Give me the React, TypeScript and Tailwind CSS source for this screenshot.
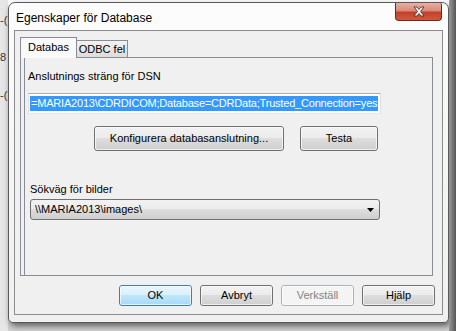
import React from "react";

const body = { fontFamily: '"Liberation Sans", Arial, sans-serif' } as React.CSSProperties;

function Btn({ label, w, h = 21, variant = "normal" }: { label: string; w: number; h?: number; variant?: "normal" | "default" | "disabled" }) {
  const outer =
    variant === "default"
      ? "border-[#3c7fb1] bg-[linear-gradient(#eaf6fd_0%,#d9f0fc_50%,#bee6fd_50%,#a7d9f5_100%)]"
      : variant === "disabled"
      ? "border-[#adb2b5] bg-[#f4f4f4]"
      : "border-[#707070] bg-[linear-gradient(#f2f2f2_0%,#ebebeb_50%,#dddddd_50%,#cfcfcf_100%)]";
  return (
    <div
      className={`flex items-center justify-center rounded-[3px] border text-[11px] text-black ${outer}`}
      style={{ width: w, height: h, ...body, ...(variant === "disabled" ? { color: "#838383" } : {}) }}
    >
      <div className="flex h-full w-full items-center justify-center rounded-[2px] border border-[#fcfcfc]/70">{label}</div>
    </div>
  );
}

export default function App() {
  return (
    <div className="relative flex h-[331px] w-[456px] overflow-hidden bg-[#d9d9d9]" style={body}>
      {/* left background strip */}
      <div className="flex h-full w-[8px] flex-col bg-[#e6e6e6] text-[11px] text-[#333]">
        <div className="mt-[14px] leading-[12px]">-(</div>
        <div className="mt-[25px] leading-[12px]">8</div>
        <div className="mt-[26px] leading-[12px]">-(</div>
      </div>
      {/* window column */}
      <div className="flex w-[441px] flex-col bg-[linear-gradient(#ffffff,#d0d0d0)] pt-[2px]">
        <div className="flex h-[321px] w-[441px] flex-col rounded-t-[7px] rounded-b-[5px] border border-[#5a5a5a] bg-[linear-gradient(#fcfcfc,#f0f0f0)] px-[5px] shadow-[2px_3px_6px_rgba(0,0,0,0.55)]">
          {/* title bar */}
          <div className="flex h-[27px] items-start">
            <div className="mt-[8px] ml-[2px] text-[12px] leading-[14px] text-black">
              Egenskaper för Database
            </div>
            <div className="ml-auto mr-[1px] flex h-[18px] w-[47px] items-center justify-center rounded-b-[4px] rounded-tr-[2px] border border-t-0 border-[#6b2a1f] bg-[linear-gradient(#eab0a4_0%,#d98a77_45%,#c2402a_55%,#cf5a40_100%)]">
              <svg width="14" height="11" viewBox="0 0 14 11">
                <path d="M2 1 L5 1 L7 3.5 L9 1 L12 1 L8.5 5.5 L12 10 L9 10 L7 7.5 L5 10 L2 10 L5.5 5.5 Z" fill="#ffffff" stroke="#5a2a25" strokeWidth="0.9" />
              </svg>
            </div>
          </div>
          {/* client area */}
          <div className="flex h-[285px] w-[429px] flex-col border border-[#8c8c8c] bg-[#f0f0f0]">
            {/* tabs */}
            <div className="ml-[5px] mt-[6px] flex h-[20px] items-end">
              <div className="relative z-10 -mb-[1px] flex h-[21px] w-[57px] items-start justify-center border border-b-0 border-[#898c95] bg-[#f9f9f9] pt-[3px] text-[11px] leading-[13px] text-black">
                Databas
              </div>
              <div className="flex h-[17px] w-[51px] items-start justify-center border border-b-0 border-l-0 border-[#898c95] bg-[linear-gradient(#f2f2f2,#dcdcdc)] pt-[2px] text-[11px] leading-[13px] text-black">
                ODBC fel
              </div>
            </div>
            {/* tab panel */}
            <div className="ml-[5px] flex h-[219px] w-[413px] flex-col border border-[#898c95] bg-[#f0f0f0]">
              <div className="ml-[3px] flex h-full flex-col border-l border-[#898c95] pl-[3px]">
                <div className="mt-[12px] text-[11px] leading-[13px] text-black">Anslutnings sträng för DSN</div>
                <div className="mt-[10px] flex h-[21px] w-[353px] items-center overflow-hidden border border-[#abadb3] border-b-[#e3e9ef] border-l-[#e2e3ea] border-r-[#dbdfe6] bg-white px-[1px]">
                  <span className="whitespace-nowrap bg-[#3399ff] px-[1px] text-[11px] leading-[15px] tracking-[-0.2px] text-white">
                    =MARIA2013\CDRDICOM;Database=CDRData;Trusted_Connection=yes
                  </span>
                </div>
                <div className="mt-[12px] flex gap-[16px] pl-[66px]">
                  <Btn label="Konfigurera databasanslutning..." w={190} h={25} />
                  <Btn label="Testa" w={78} h={25} />
                </div>
                <div className="ml-[2px] mt-[32px] text-[11px] leading-[13px] text-black">Sökväg för bilder</div>
                <div className="ml-[2px] mt-[3px] flex h-[21px] w-[350px] items-center rounded-[3px] border border-[#707070] bg-[linear-gradient(#f2f2f2_0%,#ebebeb_50%,#dddddd_50%,#cfcfcf_100%)] pl-[4px] pr-[5px]">
                  <span className="text-[11px] leading-[13px] text-black">\\MARIA2013\images\</span>
                  <svg className="ml-auto" width="7" height="4" viewBox="0 0 7 4">
                    <path d="M0 0 H7 L3.5 4 Z" fill="#000" />
                  </svg>
                </div>
              </div>
            </div>
            {/* buttons */}
            <div className="mt-[9px] flex gap-[8px] pl-[104px]">
              <Btn label="OK" w={73} variant="default" />
              <Btn label="Avbryt" w={73} />
              <Btn label="Verkställ" w={73} variant="disabled" />
              <Btn label="Hjälp" w={73} />
            </div>
          </div>
        </div>
      </div>
      {/* right background strip */}
      <div className="h-full w-[7px] bg-[linear-gradient(90deg,#9a9a9a,#555555)]" />
    </div>
  );
}
